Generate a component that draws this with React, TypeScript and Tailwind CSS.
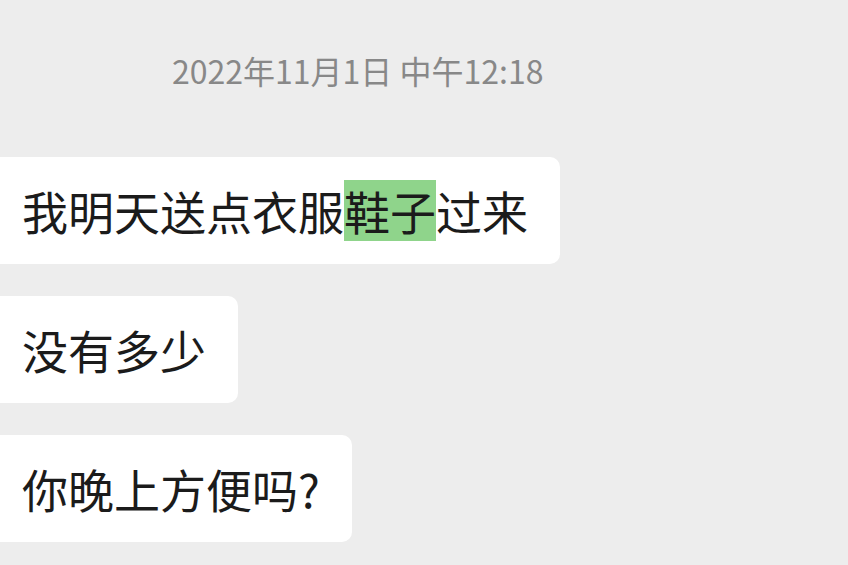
export default function App() {
  const font = { fontFamily: '"Noto Sans CJK SC", "Noto Sans", sans-serif' };
  return (
    <div className="w-[848px] h-[565px] overflow-hidden bg-[#ededed]" style={font}>
      <div className="pt-[48px] pl-[172px] text-[32px] leading-[44px] text-[#888888] whitespace-nowrap">
        2022年11月1日 中午12:18
      </div>

      <div className="mt-[65px] flex flex-col items-start gap-[32px]">
        <div className="-ml-[12px] pl-[34px] pr-[32px] py-[23px] bg-white rounded-[10px] text-[46px] leading-[61px] text-[#1b1b1b] whitespace-nowrap">
          我明天送点衣服<span className="inline-block bg-[#8fd48b] leading-[61px]">鞋子</span>过来
        </div>
        <div className="-ml-[12px] pl-[34px] pr-[32px] py-[23px] bg-white rounded-[10px] text-[46px] leading-[61px] text-[#1b1b1b] whitespace-nowrap">
          没有多少
        </div>
        <div className="-ml-[12px] pl-[34px] pr-[32px] py-[23px] bg-white rounded-[10px] text-[46px] leading-[61px] text-[#1b1b1b] whitespace-nowrap">
          你晚上方便吗?
        </div>
      </div>
    </div>
  );
}
